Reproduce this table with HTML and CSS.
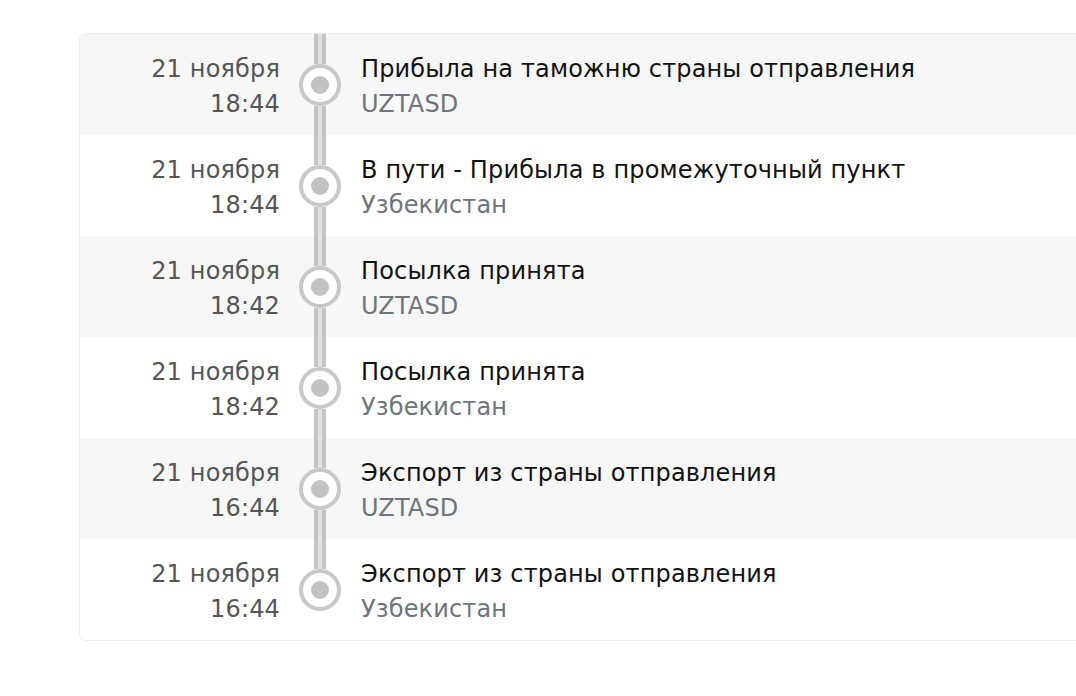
FILE: index.html
```html
<!DOCTYPE html>
<html lang="ru">
<head>
<meta charset="utf-8">
<title>Трекинг</title>
<link rel="stylesheet" href="styles.css">
</head>
<body>
<div class="card">
  <div class="row">
    <div class="when"><div>21 ноября</div><div>18:44</div></div>
    <div class="marker"><span class="seg"></span><span class="dot"></span><span class="seg"></span></div>
    <div class="what"><div class="title">Прибыла на таможню страны отправления</div><div class="place">UZTASD</div></div>
  </div>
  <div class="row">
    <div class="when"><div>21 ноября</div><div>18:44</div></div>
    <div class="marker"><span class="seg"></span><span class="dot"></span><span class="seg"></span></div>
    <div class="what"><div class="title">В пути - Прибыла в промежуточный пункт</div><div class="place">Узбекистан</div></div>
  </div>
  <div class="row">
    <div class="when"><div>21 ноября</div><div>18:42</div></div>
    <div class="marker"><span class="seg"></span><span class="dot"></span><span class="seg"></span></div>
    <div class="what"><div class="title">Посылка принята</div><div class="place">UZTASD</div></div>
  </div>
  <div class="row">
    <div class="when"><div>21 ноября</div><div>18:42</div></div>
    <div class="marker"><span class="seg"></span><span class="dot"></span><span class="seg"></span></div>
    <div class="what"><div class="title">Посылка принята</div><div class="place">Узбекистан</div></div>
  </div>
  <div class="row">
    <div class="when"><div>21 ноября</div><div>16:44</div></div>
    <div class="marker"><span class="seg"></span><span class="dot"></span><span class="seg"></span></div>
    <div class="what"><div class="title">Экспорт из страны отправления</div><div class="place">UZTASD</div></div>
  </div>
  <div class="row">
    <div class="when"><div>21 ноября</div><div>16:44</div></div>
    <div class="marker"><span class="seg"></span><span class="dot"></span><span class="seg seg-end"></span></div>
    <div class="what"><div class="title">Экспорт из страны отправления</div><div class="place">Узбекистан</div></div>
  </div>
</div>
</body>
</html>
```

FILE: styles.css
```css
html, body {
  margin: 0;
  padding: 0;
  background: #ffffff;
  overflow: hidden;
}

body {
  font-family: "DejaVu Sans", Verdana, sans-serif;
  font-size: 24px;
  line-height: 35px;
  letter-spacing: 0.15px;
}

.card {
  margin: 33px -30px 0 79px;
  border: 1px solid #eeeeee;
  border-radius: 7px;
  overflow: hidden;
  background: #ffffff;
}

.row {
  display: flex;
  align-items: stretch;
  height: 101px;
}

.row:nth-child(odd) {
  background: #f7f7f7;
}

.when {
  width: 200px;
  flex: none;
  text-align: right;
  color: #555555;
  padding-top: 18px;
  box-sizing: border-box;
}

.marker {
  width: 80px;
  flex: none;
  display: flex;
  flex-direction: column;
  align-items: center;
}

.seg {
  flex: 1;
  width: 12px;
  box-sizing: border-box;
  border-left: 4px solid #c4c4c4;
  border-right: 4px solid #c4c4c4;
  background: #e2e2e2;
}

.seg-end {
  visibility: hidden;
}

.dot {
  flex: none;
  width: 42px;
  height: 42px;
  box-sizing: border-box;
  border: 4px solid #c8c8c8;
  border-radius: 50%;
  background: #ffffff;
  display: flex;
  align-items: center;
  justify-content: center;
}

.dot::after {
  content: "";
  width: 18px;
  height: 18px;
  border-radius: 50%;
  background: #c2c2c2;
}

.what {
  flex: 1;
  padding-top: 18px;
  padding-left: 1px;
}

.title {
  color: #111111;
  white-space: nowrap;
}

.place {
  color: #6e747c;
}
```
